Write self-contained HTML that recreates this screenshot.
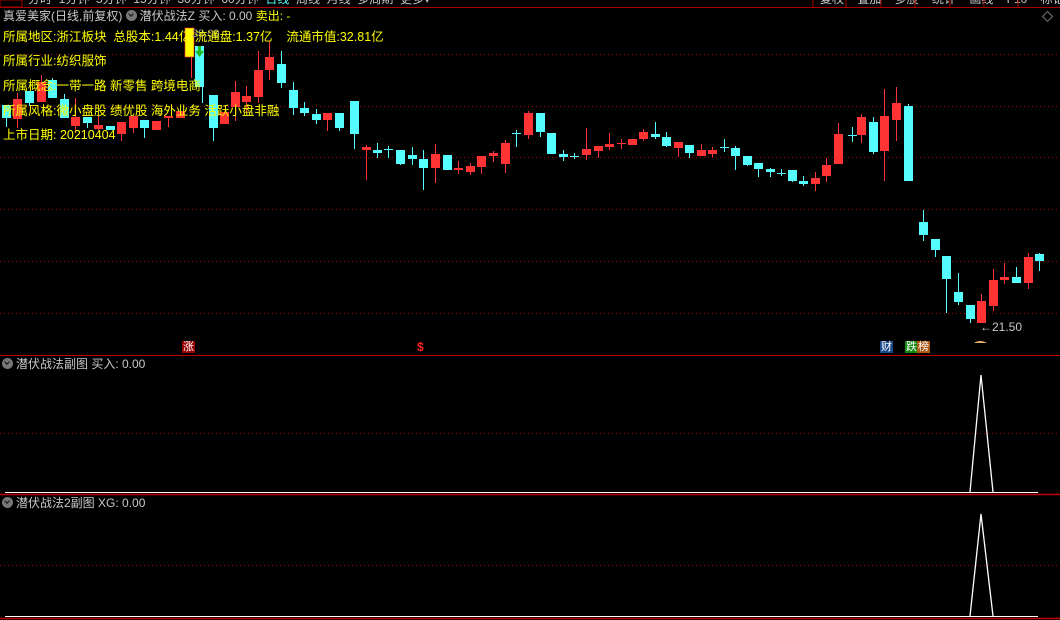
<!DOCTYPE html>
<html><head><meta charset="utf-8"><style>
html,body{margin:0;padding:0;background:#000;width:1060px;height:620px;overflow:hidden}
body{position:relative;font-family:"Liberation Sans","Noto Sans CJK SC",sans-serif}
.t{position:absolute;white-space:nowrap;font-size:12px;line-height:15px}
.y{color:#ffff00}.g{color:#c8c8c8}
.i{font-size:12.5px}
.circ{display:inline-block;width:11px;height:11px;border-radius:50%;background:#777;vertical-align:-1px;margin-right:3px;position:relative}
.circ:after{content:"";position:absolute;left:3px;top:2px;width:3px;height:3px;border-right:1.5px solid #111;border-bottom:1.5px solid #111;transform:rotate(45deg)}
.tag{position:absolute;font-size:11px;line-height:12px;color:#fff;padding:0 1px}
.top{position:absolute;top:-8px;height:15px;overflow:hidden;font-size:12px;line-height:15px;color:#c8c8c8;white-space:nowrap}
</style></head><body>
<div class="top" style="left:28px">分时&nbsp; 1分钟&nbsp; 5分钟&nbsp; 15分钟&nbsp; 30分钟&nbsp; 60分钟&nbsp; <span style="color:#55ffff">日线</span>&nbsp; 周线&nbsp; 月线&nbsp; 多周期&nbsp; 更多▾</div>
<div class="top" style="left:820px;word-spacing:10px">复权 叠加 多股 统计 画线 F10 标记</div>
<svg width="1060" height="620" style="position:absolute;left:0;top:0" xmlns="http://www.w3.org/2000/svg">
<rect x="0" y="0" width="22" height="7" fill="none" stroke="#aa0000"/>
<line x1="0" y1="7.5" x2="1060" y2="7.5" stroke="#aa0000"/>
<g stroke="#aa0000"><line x1="813" y1="0" x2="813" y2="7"/><line x1="846" y1="0" x2="846" y2="7"/><line x1="881" y1="0" x2="881" y2="7"/><line x1="915" y1="0" x2="915" y2="7"/><line x1="950" y1="0" x2="950" y2="7"/><line x1="984" y1="0" x2="984" y2="7"/><line x1="1018" y1="0" x2="1018" y2="7"/></g>
<rect x="1044" y="13" width="7" height="7" fill="none" stroke="#777" transform="rotate(45 1047.5 16.5)"/>
<g stroke="#a00000" stroke-dasharray="1 3">
<line x1="0" y1="54.5" x2="1060" y2="54.5"/><line x1="0" y1="106.5" x2="1060" y2="106.5"/><line x1="0" y1="157.5" x2="1060" y2="157.5"/>
<line x1="0" y1="209.5" x2="1060" y2="209.5"/><line x1="0" y1="261.5" x2="1060" y2="261.5"/><line x1="0" y1="313.5" x2="1060" y2="313.5"/>
<line x1="0" y1="433.5" x2="1060" y2="433.5"/><line x1="0" y1="565.5" x2="1060" y2="565.5"/>
</g>
<line x1="0" y1="355.5" x2="1060" y2="355.5" stroke="#c00000"/>
<line x1="0" y1="494.5" x2="1060" y2="494.5" stroke="#c00000" stroke-width="1.5"/>
<line x1="0" y1="618.5" x2="1060" y2="618.5" stroke="#c00000" stroke-width="1.5"/>
<line x1="5" y1="492.5" x2="1038" y2="492.5" stroke="#fff"/>
<line x1="5" y1="616.5" x2="1038" y2="616.5" stroke="#fff"/>
<polyline points="970,492 981,375 993,492" fill="none" stroke="#fff" stroke-width="1.3"/>
<polyline points="970,616 981,514 993,616" fill="none" stroke="#fff" stroke-width="1.3"/>
<g id="c"></g>
</svg>
<script>
var d=[
[6,'c',105,118,105,127],[17,'r',99,119,93,128],[29,'c',91,103,91,106],[41,'r',82,102,75,102],[52,'c',80,98,78,98],
[64,'c',99,118,94,118],[75,'r',117,126,98,133],[87,'c',117,123,117,128],[98,'r',125,129,115,130],[110,'c',126,130,126,130],
[121,'r',122,134,122,141],[133,'r',116,128,116,133],[144,'c',120,128,120,138],[156,'r',121,130,121,130],[168,'r',116,118,116,127],
[180,'r',111,118,111,118],[213,'c',95,128,95,141],[224,'r',112,124,112,124],[235,'r',92,107,81,121],[246,'r',96,102,86,112],
[258,'r',70,97,51,103],[269,'r',57,70,41,80],[281,'c',64,83,51,88],[293,'c',90,108,82,115],[304,'c',108,113,102,116],
[316,'c',114,120,109,124],[327,'r',113,120,113,131],[339,'c',113,128,113,131],[354,'c',101,134,101,149],[366,'r',147,150,145,180],
[377,'c',150,153,143,158],[388,'c',149,150,146,158],[400,'c',150,164,150,165],[412,'c',155,159,147,165],[423,'c',159,168,150,190],
[435,'r',154,168,144,183],[447,'c',155,170,155,170],[458,'r',168,170,161,174],[470,'r',166,172,163,175],[481,'r',156,167,156,174],
[493,'r',153,156,151,162],[505,'r',143,164,140,173],[516,'c',133,134,130,147],[528,'r',113,135,111,139],[540,'c',113,132,113,137],
[551,'c',133,154,133,154],[563,'c',154,157,150,161],[574,'c',156,157,153,159],[586,'r',149,155,128,160],[598,'r',146,151,146,158],
[609,'r',144,147,133,150],[621,'r',143,144,139,149],[632,'r',139,145,139,145],[643,'r',132,139,129,141],[655,'c',134,137,122,139],
[666,'c',137,146,132,147],[678,'r',142,148,142,157],[689,'c',145,153,145,158],[701,'r',150,156,144,156],[712,'r',150,154,147,157],
[724,'c',147,148,139,152],[735,'c',148,156,146,170],[747,'c',156,165,156,166],[758,'c',163,169,163,177],[770,'c',169,172,168,177],
[781,'c',173,174,169,176],[792,'c',170,181,170,182],[803,'c',181,184,176,186],[815,'r',178,184,172,191],[826,'r',165,176,158,182],
[838,'r',134,164,123,164],[852,'c',135,136,127,142],[861,'r',117,135,114,143],[873,'c',122,152,117,154],[884,'r',116,151,89,181],
[896,'r',103,120,87,141],[908,'c',106,181,104,181],[923,'c',222,235,210,241],[935,'c',239,250,239,257],[946,'c',256,279,256,313],
[958,'c',292,302,273,305],[970,'c',305,319,305,323],[981,'r',301,323,294,323],[993,'r',280,306,269,311],[1004,'r',277,280,263,284],
[1016,'c',277,283,267,283],[1028,'r',257,283,253,289],[1039,'c',254,261,253,271]];
var s='';d.forEach(function(a){var col=a[1]=='c'?'#55ffff':'#ff3333';var x=a[0];
s+='<line x1="'+(x+0.5)+'" y1="'+a[4]+'" x2="'+(x+0.5)+'" y2="'+a[5]+'" stroke="'+col+'"/>';
var h=Math.max(1,a[3]-a[2]);s+='<rect x="'+(x-4)+'" y="'+a[2]+'" width="9" height="'+h+'" fill="'+col+'"/>';});
s+='<line x1="191.5" y1="28" x2="191.5" y2="78" stroke="#ff3333"/><rect x="185" y="28" width="9" height="29" fill="#ffff00" stroke="#ff3333" stroke-width="0.6"/>';
s+='<line x1="202.5" y1="46" x2="202.5" y2="103" stroke="#55ffff"/><rect x="195" y="46" width="9" height="41" fill="#55ffff"/>';
s+='<path d="M198 46h3v5h3l-4.5 6l-4.5-6h3z" fill="#22bb22"/>';
s+='<path d="M974 343 Q980 339 987 343 Z" fill="#e8b070"/>';
document.getElementById('c').innerHTML=s;
</script>
<div class="t g" style="left:3px;top:9px">真爱美家(日线,前复权) <span class="circ"></span>潜伏战法Z 买入: 0.00 <span class="y">卖出: -</span></div>
<div class="t g" style="left:192px;top:27px;font-size:11px;color:#999">38.00</div>
<div class="t y i" style="left:3px;top:30px">所属地区:浙江板块&nbsp; 总股本:1.44亿 流通盘:1.37亿&nbsp;&nbsp;&nbsp; 流通市值:32.81亿</div>
<div class="t y i" style="left:3px;top:54px">所属行业:纺织服饰</div>
<div class="t y i" style="left:3px;top:79px">所属概念:一带一路 新零售 跨境电商</div>
<div class="t y i" style="left:3px;top:104px">所属风格:微小盘股 绩优股 海外业务 活跃小盘非融</div>
<div class="t y i" style="left:3px;top:128px">上市日期: 20210404</div>
<div class="t g" style="left:980px;top:320px;font-size:12px">←21.50</div>
<div class="tag" style="left:182px;top:341px;background:#990000">涨</div>
<div class="t" style="left:417px;top:340px;color:#ff2222;font-size:12px;font-weight:bold">$</div>
<div class="tag" style="left:880px;top:341px;background:#1a4a8a">财</div>
<div class="tag" style="left:905px;top:341px;background:#118811">跌</div>
<div class="tag" style="left:917px;top:341px;background:#aa5511">榜</div>
<div class="t g" style="left:2px;top:357px"><span class="circ"></span>潜伏战法副图 买入: 0.00</div>
<div class="t g" style="left:2px;top:496px"><span class="circ"></span>潜伏战法2副图 XG: 0.00</div>
</body></html>
